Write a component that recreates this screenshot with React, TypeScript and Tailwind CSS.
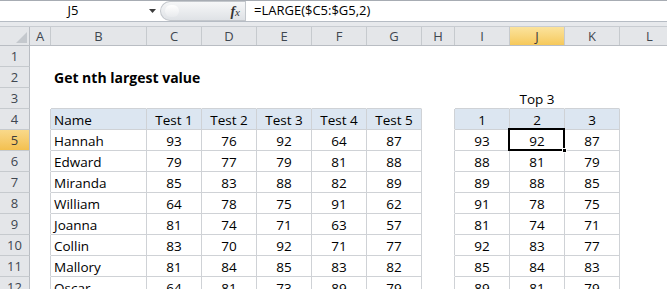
import React from 'react';

type Col = { id: string; w: string };
const COLS: Col[] = [
  { id: 'A', w: 'w-[21px]' },
  { id: 'B', w: 'w-[96px]' },
  { id: 'C', w: 'w-[55px]' },
  { id: 'D', w: 'w-[55px]' },
  { id: 'E', w: 'w-[55px]' },
  { id: 'F', w: 'w-[55px]' },
  { id: 'G', w: 'w-[55px]' },
  { id: 'H', w: 'w-[33px]' },
  { id: 'I', w: 'w-[55px]' },
  { id: 'J', w: 'w-[55px]' },
  { id: 'K', w: 'w-[55px]' },
  { id: 'L', w: 'w-[60px]' },
];

const DATA: [string, number[], number[]][] = [
  ['Hannah', [93, 76, 92, 64, 87], [93, 92, 87]],
  ['Edward', [79, 77, 79, 81, 88], [88, 81, 79]],
  ['Miranda', [85, 83, 88, 82, 89], [89, 88, 85]],
  ['William', [64, 78, 75, 91, 62], [91, 78, 75]],
  ['Joanna', [81, 74, 71, 63, 57], [81, 74, 71]],
  ['Collin', [83, 70, 92, 71, 77], [92, 83, 77]],
  ['Mallory', [81, 84, 85, 83, 82], [85, 84, 83]],
  ['Oscar', [64, 81, 73, 89, 79], [89, 81, 79]],
];

const ROWS = Array.from({ length: 13 }, (_, i) => i + 1);

function inTable(r: number, c: number) {
  if (r < 4 || r > 12 || c < 0) return false;
  return (c >= 1 && c <= 6) || (c >= 8 && c <= 10);
}

function cellContent(r: number, c: number): { text: string; align: 'left' | 'center'; bold?: boolean } | null {
  const id = COLS[c].id;
  if (r === 2 && id === 'B') return { text: 'Get nth largest value', align: 'left', bold: true };
  if (r === 3 && id === 'J') return { text: 'Top 3', align: 'center' };
  if (r === 4) {
    if (id === 'B') return { text: 'Name', align: 'left' };
    if (c >= 2 && c <= 6) return { text: `Test ${c - 1}`, align: 'center' };
    if (c >= 8 && c <= 10) return { text: String(c - 7), align: 'center' };
  }
  if (r >= 5 && r <= 12) {
    const d = DATA[r - 5];
    if (id === 'B') return { text: d[0], align: 'left' };
    if (c >= 2 && c <= 6) return { text: String(d[1][c - 2]), align: 'center' };
    if (c >= 8 && c <= 10) return { text: String(d[2][c - 8]), align: 'center' };
  }
  return null;
}

function Cell({ r, c }: { r: number; c: number }) {
  const col = COLS[c];
  const t = inTable(r, c);
  const right = t || inTable(r, c + 1);
  const bottom = t || inTable(r + 1, c);
  const content = cellContent(r, c);
  const header = r === 4 && t;
  const selected = r === 5 && col.id === 'J';
  return (
    <div
      className={[
        'relative flex h-[21px] shrink-0 items-end border-b border-r',
        col.w,
        right ? 'border-r-[#cfd2d6]' : 'border-r-white',
        bottom ? 'border-b-[#cfd2d6]' : 'border-b-white',
        header ? 'bg-[#dce6f1]' : 'bg-white',
        content && content.align === 'center' ? 'justify-center' : 'justify-start pl-[3px]',
      ].join(' ')}
    >
      {content && (
        <span
          className={
            'relative z-10 whitespace-nowrap text-black ' +
            (content.bold ? 'text-[14px] leading-[18px] font-bold' : 'text-[13.5px] leading-[17px] font-normal')
          }
        >
          {content.text}
        </span>
      )}
      {selected && (
        <>
          <div className="pointer-events-none absolute -left-[2px] -right-[1px] -top-[2px] -bottom-[1px] z-20 border-2 border-black" />
          <div className="pointer-events-none absolute -bottom-[3px] -right-[3px] z-20 h-[5px] w-[5px] border border-white bg-black" />
        </>
      )}
    </div>
  );
}

export default function App() {
  return (
    <div
      className="h-[289px] w-[667px] overflow-hidden bg-white text-[13px]"
      style={{ fontFamily: '"Open Sans", "Noto Sans", sans-serif' }}
    >
      {/* Formula bar */}
      <div className="flex h-[22px] border-b border-t border-b-[#b6bcc4] border-t-[#a7acb3] bg-white">
        <div className="flex w-[146px] items-center justify-center text-black">J5</div>
        <div className="flex w-[12px] items-center justify-center">
          <svg width="7" height="4" viewBox="0 0 7 4">
            <path d="M0 0 L7 0 L3.5 4 Z" fill="#3c3c3c" />
          </svg>
        </div>
        <div className="w-[2px]" />
        <div className="relative flex w-[85px] items-center justify-end rounded-l-full border border-r-0 border-[#c3c7cc] bg-gradient-to-b from-[#f6f7f8] to-[#dfe2e6] pr-[5px]">
          <div className="absolute left-[4px] top-[3px] h-[12px] w-[14px] rounded-full bg-gradient-to-b from-white to-[#e8eaed]" />
          <span
            className="text-[14px] italic text-[#333]"
            style={{ fontFamily: '"Liberation Serif", serif' }}
          >
            <span className="font-bold">f</span>
            <span className="text-[11px]">x</span>
          </span>
        </div>
        <div className="flex flex-1 items-center border-l border-l-[#c3c7cc] pl-[8px] text-black">
          =LARGE($C5:$G5,2)
        </div>
      </div>
      {/* gap band */}
      <div className="h-[5px] border-b border-b-[#c8ccd1] bg-[#e7e9ec]" />
      {/* Column header row */}
      <div className="flex h-[19px] border-b border-b-[#b9bdc3]">
        <div className="relative h-full w-[30px] shrink-0 border-r border-r-[#b9bdc3] bg-[#e4e6e9]">
          <svg className="absolute bottom-[2px] right-[2px]" width="11" height="11" viewBox="0 0 11 11">
            <path d="M11 0 L11 11 L0 11 Z" fill="#c4c8cd" />
          </svg>
        </div>
        {COLS.map((col) => (
          <div
            key={col.id}
            className={[
              'flex h-full shrink-0 items-center justify-center border-r border-r-[#c6cace] leading-none',
              col.w,
              col.id === 'J'
                ? 'bg-gradient-to-b from-[#fbe39c] to-[#f6c95a] text-[#3c3c3c]'
                : 'bg-[#e4e6e9] text-[#3f4750]',
            ].join(' ')}
          >
            {col.id}
          </div>
        ))}
      </div>
      {/* Grid rows */}
      {ROWS.map((r) => (
        <div key={r} className="flex">
          <div
            className={[
              'flex h-[21px] w-[30px] shrink-0 items-center justify-center border-b border-r border-b-[#c6cace] border-r-[#b9bdc3] leading-none',
              r === 5
                ? 'bg-gradient-to-b from-[#f9d98a] to-[#f3c04e] text-[#3c3c3c]'
                : 'bg-[#e4e6e9] text-[#3f4750]',
            ].join(' ')}
          >
            {r}
          </div>
          {COLS.map((_, c) => (
            <Cell key={c} r={r} c={c} />
          ))}
        </div>
      ))}
    </div>
  );
}
